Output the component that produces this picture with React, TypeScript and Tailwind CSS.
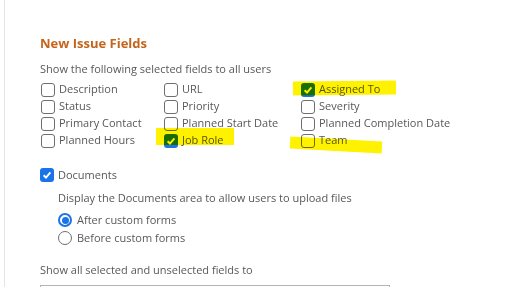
import React from "react";

const Box = ({ checked }: { checked?: boolean }) =>
  checked ? (
    <span className="flex h-[14px] w-[14px] shrink-0 items-center justify-center rounded-[3px] bg-[#1a73e8]">
      <svg width="10" height="10" viewBox="0 0 10 10">
        <path d="M1.6 5.2 L4 7.5 L8.4 2.4" fill="none" stroke="white" strokeWidth="1.9" />
      </svg>
    </span>
  ) : (
    <span className="h-[14px] w-[14px] shrink-0 rounded-[3px] border border-[#6f6f6f] bg-white" />
  );

const Field = ({ label, checked }: { label: string; checked?: boolean }) => (
  <div className="flex h-[17px] items-center gap-[4px]">
    <Box checked={checked} />
    <span>{label}</span>
  </div>
);

const Radio = ({ label, on }: { label: string; on?: boolean }) => (
  <div className="flex h-[18px] items-center gap-[5px]">
    {on ? (
      <span className="flex h-[14px] w-[14px] items-center justify-center rounded-full border-2 border-[#1a73e8]">
        <span className="h-[7px] w-[7px] rounded-full bg-[#1a73e8]" />
      </span>
    ) : (
      <span className="h-[14px] w-[14px] rounded-full border border-[#6f6f6f]" />
    )}
    <span>{label}</span>
  </div>
);

export default function App() {
  const rows: [string, boolean?][][] = [
    [["Description"], ["URL"], ["Assigned To", true]],
    [["Status"], ["Priority"], ["Severity"]],
    [["Primary Contact"], ["Planned Start Date"], ["Planned Completion Date"]],
    [["Planned Hours"], ["Job Role", true], ["Team"]],
  ];

  return (
    <div className="relative h-[287px] w-[525px] overflow-hidden bg-white font-['Open_Sans',sans-serif] text-[11px] text-[#585858]">
      <div className="ml-[4px] h-full border-l border-[#e4e4e4] pl-[35px] pt-[35px]">
        <h2 className="text-[13px] font-bold leading-[16px] text-[#c5651c]">New Issue Fields</h2>
        <p className="mt-[10px] leading-[16px]">Show the following selected fields to all users</p>

        <div className="mt-[4px] grid grid-cols-[123px_137px_auto] pl-[1px]">
          {rows.map((r) =>
            r.map(([label, checked]) => <Field key={label} label={label} checked={checked} />)
          )}
        </div>

        <div className="mt-[18px] flex h-[16px] items-center gap-[4px]">
          <Box checked />
          <span>Documents</span>
        </div>
        <div className="pl-[18px]">
          <p className="mt-[7px] leading-[16px]">Display the Documents area to allow users to upload files</p>
          <div className="mt-[5px]">
            <Radio label="After custom forms" on />
            <Radio label="Before custom forms" />
          </div>
        </div>

        <p className="mt-[15px] leading-[16px]">Show all selected and unselected fields to</p>
        <div className="mt-[7px] h-[30px] w-[350px] border border-[#b5b5b5]" />
      </div>

      {/* marker highlights */}
      <div className="pointer-events-none absolute left-[293px] top-[81px] h-[14px] w-[103px] -rotate-[0.5deg] bg-[#fff200] mix-blend-multiply" />
      <div className="pointer-events-none absolute left-[156px] top-[128px] h-[17px] w-[78px] bg-[#fff200] mix-blend-multiply" />
      <div className="pointer-events-none absolute left-[290px] top-[139px] h-[12px] w-[92px] rotate-[3deg] bg-[#fff200] mix-blend-multiply" />
    </div>
  );
}
